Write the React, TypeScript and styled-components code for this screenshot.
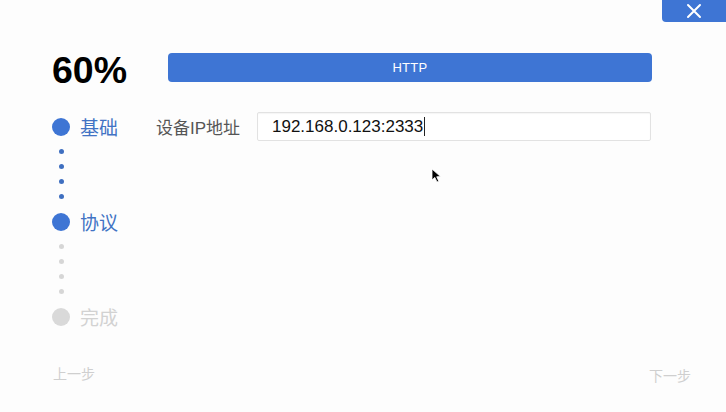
import React from "react";
import styled, { createGlobalStyle } from "styled-components";

const Global = createGlobalStyle`
  html, body { margin: 0; padding: 0; background: #fdfdfd; }
  body { font-family: "Liberation Sans", "Noto Sans CJK SC", sans-serif; }
  * { box-sizing: border-box; }
`;

const BLUE = "#3e75d4";

const Window = styled.div`
  position: relative;
  width: 726px;
  height: 412px;
  display: flex;
  flex-direction: column;
  background: #fdfdfd;
  overflow: hidden;
`;

const TopBar = styled.div`
  display: flex;
  justify-content: flex-end;
  height: 22px;
`;

const CloseButton = styled.button`
  width: 64px;
  height: 22px;
  border: none;
  padding: 0;
  margin: 0;
  background: ${BLUE};
  border-bottom-left-radius: 4px;
  display: flex;
  align-items: center;
  justify-content: center;
`;

const Main = styled.div`
  display: flex;
  padding-top: 30px;
  flex: 1;
`;

const Sidebar = styled.div`
  width: 156px;
  padding-left: 52px;
  display: flex;
  flex-direction: column;
`;

const Percent = styled.div`
  font-family: "Liberation Sans", sans-serif;
  font-weight: bold;
  font-size: 37.5px;
  line-height: 36px;
  color: #000;
  height: 36px;
`;

const Steps = styled.div`
  display: flex;
  flex-direction: column;
  margin-top: 30px;
`;

const StepRow = styled.div`
  display: flex;
  align-items: center;
  gap: 10px;
  height: 18px;
`;

const StepCircle = styled.div<{ $active: boolean }>`
  width: 18px;
  height: 18px;
  border-radius: 50%;
  background: ${(p) => (p.$active ? BLUE : "#d9d9d9")};
`;

const StepLabel = styled.span<{ $active: boolean }>`
  font-family: "Noto Sans CJK SC", sans-serif;
  font-size: 19px;
  line-height: 18px;
  color: ${(p) => (p.$active ? "#4273c4" : "#d2d2d2")};
`;

const DotColumn = styled.div`
  display: flex;
  flex-direction: column;
  align-items: center;
  width: 18px;
  gap: 10px;
  padding: 13px 0 14px;
`;

const Dot = styled.div<{ $active: boolean }>`
  width: 5px;
  height: 5px;
  border-radius: 50%;
  background: ${(p) => (p.$active ? "#3f6fc0" : "#d6d6d6")};
`;

const Content = styled.div`
  display: flex;
  flex-direction: column;
  padding-top: 1px;
`;

const ProtocolButton = styled.button`
  margin-left: 12px;
  width: 484px;
  height: 29px;
  border: none;
  border-radius: 4px;
  background: ${BLUE};
  color: #fff;
  font-family: "Liberation Sans", sans-serif;
  font-size: 13px;
  letter-spacing: 0.3px;
  padding: 0;
`;

const FormRow = styled.div`
  display: flex;
  align-items: center;
  gap: 16px;
  margin-top: 30px;
`;

const Label = styled.span`
  font-family: "Liberation Sans", "Noto Sans CJK SC", sans-serif;
  font-size: 17px;
  color: #555;
  width: 85px;
  white-space: nowrap;
`;

const Input = styled.div`
  width: 394px;
  height: 29px;
  border: 1px solid #e2e2e2;
  border-radius: 2px;
  background: #fff;
  box-shadow: inset 0 1px 1px rgba(0, 0, 0, 0.04);
  display: flex;
  align-items: center;
  padding-left: 14px;
  font-family: "Liberation Sans", sans-serif;
  font-size: 17px;
  color: #111;
`;

const Caret = styled.span`
  display: inline-block;
  width: 1px;
  height: 19px;
  background: #222;
  margin-left: 1px;
`;

const Footer = styled.div`
  display: flex;
  justify-content: space-between;
  align-items: center;
  padding: 0 35px 29px 53px;
`;

const NavText = styled.span<{ $offset?: number }>`
  font-family: "Noto Sans CJK SC", sans-serif;
  font-size: 14px;
  color: #cfcfcf;
  position: relative;
  top: ${(p) => p.$offset ?? 0}px;
`;

const Cursor = styled.svg`
  position: absolute;
  left: 431px;
  top: 168px;
`;

type Step = { label: string; active: boolean; dotsActive?: boolean };

const steps: Step[] = [
  { label: "基础", active: true, dotsActive: true },
  { label: "协议", active: true, dotsActive: false },
  { label: "完成", active: false },
];

export default function App() {
  return (
    <>
      <Global />
      <Window>
        <TopBar>
          <CloseButton aria-label="close">
            <svg width="16" height="16" viewBox="0 0 16 16">
              <path d="M2 2 L14 14 M14 2 L2 14" stroke="#fff" strokeWidth="2" strokeLinecap="round" />
            </svg>
          </CloseButton>
        </TopBar>
        <Main>
          <Sidebar>
            <Percent>60%</Percent>
            <Steps>
              {steps.map((s, i) => (
                <React.Fragment key={s.label}>
                  <StepRow>
                    <StepCircle $active={s.active} />
                    <StepLabel $active={s.active}>{s.label}</StepLabel>
                  </StepRow>
                  {i < steps.length - 1 && (
                    <DotColumn>
                      {[0, 1, 2, 3].map((d) => (
                        <Dot key={d} $active={!!s.dotsActive} />
                      ))}
                    </DotColumn>
                  )}
                </React.Fragment>
              ))}
            </Steps>
          </Sidebar>
          <Content>
            <ProtocolButton>HTTP</ProtocolButton>
            <FormRow>
              <Label>设备IP地址</Label>
              <Input>
                192.168.0.123:2333
                <Caret />
              </Input>
            </FormRow>
          </Content>
        </Main>
        <Footer>
          <NavText>上一步</NavText>
          <NavText $offset={2}>下一步</NavText>
        </Footer>
        <Cursor width="12" height="16" viewBox="0 0 12 16">
          <path d="M1 1 L1 12 L3.8 9.4 L6 14 L7.8 13.2 L5.7 8.8 L9.5 8.6 Z" fill="#000" stroke="#fff" strokeWidth="0.8" />
        </Cursor>
      </Window>
    </>
  );
}
